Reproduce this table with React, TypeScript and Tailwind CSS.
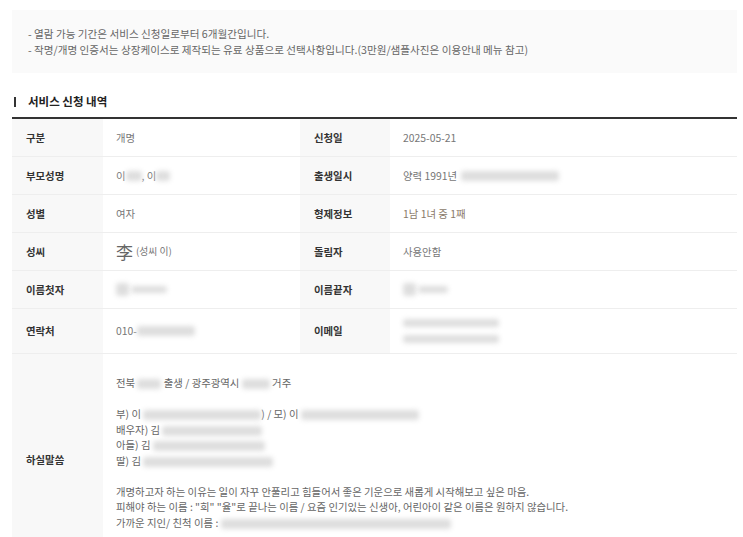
import React from 'react'

const font = { fontFamily: '"Noto Sans CJK KR", "Noto Sans", sans-serif' }

function Blur({ w, h = 10 }: { w: number; h?: number }) {
  return (
    <span
      className="inline-block align-middle bg-[#dedede] rounded-[3px] blur-[2.5px]"
      style={{ width: w, height: h }}
    />
  )
}

function Label({ children }: { children: React.ReactNode }) {
  return (
    <div className="bg-[#f8f8f8] flex items-center pl-[14px] text-[10.4px] font-bold text-[#333]">
      {children}
    </div>
  )
}

function Value({ children }: { children: React.ReactNode }) {
  return (
    <div className="flex items-center pl-[13px] text-[10.4px] text-[#777]">{children}</div>
  )
}

function Row({ children, tall }: { children: React.ReactNode; tall?: boolean }) {
  return (
    <div
      className={
        'grid grid-cols-[91px_197px_90px_1fr] border-b border-[#eeeeee] ' +
        (tall ? 'min-h-[45px]' : 'h-[38px]')
      }
    >
      {children}
    </div>
  )
}

export default function App() {
  return (
    <div className="w-[743px] h-[537px] overflow-hidden bg-white pl-[12px] pr-[6px] pt-[10px]" style={font}>
      <div className="bg-[#fafafa] h-[63px] flex flex-col justify-center pl-[16px] text-[10.6px] leading-[16px] text-[#666]">
        <p>- 열람 가능 기간은 서비스 신청일로부터 6개월간입니다.</p>
        <p>- 작명/개명 인증서는 상장케이스로 제작되는 유료 상품으로 선택사항입니다.(3만원/샘플사진은 이용안내 메뉴 참고)</p>
      </div>

      <div className="mt-[21px] flex items-center h-[16px]">
        <span className="ml-[2px] w-[2px] h-[10px] bg-[#333]" />
        <h2 className="ml-[12px] text-[11.5px] font-bold text-[#222]">서비스 신청 내역</h2>
      </div>

      <div className="mt-[7px] border-t-2 border-[#333]">
        <Row>
          <Label>구분</Label>
          <Value>개명</Value>
          <Label>신청일</Label>
          <Value>2025-05-21</Value>
        </Row>
        <Row>
          <Label>부모성명</Label>
          <Value>
            <span>이</span>
            <Blur w={16} />
            <span>, 이</span>
            <Blur w={14} />
          </Value>
          <Label>출생일시</Label>
          <Value>
            <span>양력 1991년</span>
            <span className="ml-[4px]" />
            <Blur w={98} />
          </Value>
        </Row>
        <Row>
          <Label>성별</Label>
          <Value>여자</Value>
          <Label>형제정보</Label>
          <Value>
            <span className="text-[#8a7a6a]">1남 1녀 중 1째</span>
          </Value>
        </Row>
        <Row>
          <Label>성씨</Label>
          <Value>
            <span className="text-[17px] leading-none text-[#666]">李</span>
            <span className="ml-[3px] text-[9.8px]">(성씨 이)</span>
          </Value>
          <Label>돌림자</Label>
          <Value>사용안함</Value>
        </Row>
        <Row>
          <Label>이름첫자</Label>
          <Value>
            <Blur w={13} h={13} />
            <span className="ml-[2px]" />
            <Blur w={36} h={7} />
          </Value>
          <Label>이름끝자</Label>
          <Value>
            <Blur w={13} h={13} />
            <span className="ml-[2px]" />
            <Blur w={30} h={7} />
          </Value>
        </Row>
        <Row tall>
          <Label>연락처</Label>
          <Value>
            <span>010-</span>
            <Blur w={58} />
          </Value>
          <Label>이메일</Label>
          <div className="flex flex-col justify-center pl-[13px] gap-[8px]">
            <Blur w={96} h={8} />
            <Blur w={96} h={8} />
          </div>
        </Row>
        <div className="grid grid-cols-[91px_1fr] border-b border-[#eeeeee]">
          <Label>하실말씀</Label>
          <div className="pl-[13px] py-[21px] text-[10.4px] leading-[15.5px] text-[#666]">
            <p>
              전북 <Blur w={24} /> 출생 / 광주광역시 <Blur w={28} /> 거주
            </p>
            <p>&nbsp;</p>
            <p>
              부) 이 <Blur w={118} />) / 모) 이 <Blur w={118} />
            </p>
            <p>
              배우자) 김 <Blur w={100} />
            </p>
            <p>
              아들) 김 <Blur w={112} />
            </p>
            <p>
              딸) 김 <Blur w={130} />
            </p>
            <p>&nbsp;</p>
            <p>개명하고자 하는 이유는 일이 자꾸 안풀리고 힘들어서 좋은 기운으로 새롭게 시작해보고 싶은 마음.</p>
            <p>피해야 하는 이름 : "희" "율"로 끝나는 이름 / 요즘 인기있는 신생아, 어린아이 같은 이름은 원하지 않습니다.</p>
            <p>
              가까운 지인/ 친척 이름 : <Blur w={230} />
            </p>
            <p>&nbsp;</p>
          </div>
        </div>
      </div>
    </div>
  )
}
